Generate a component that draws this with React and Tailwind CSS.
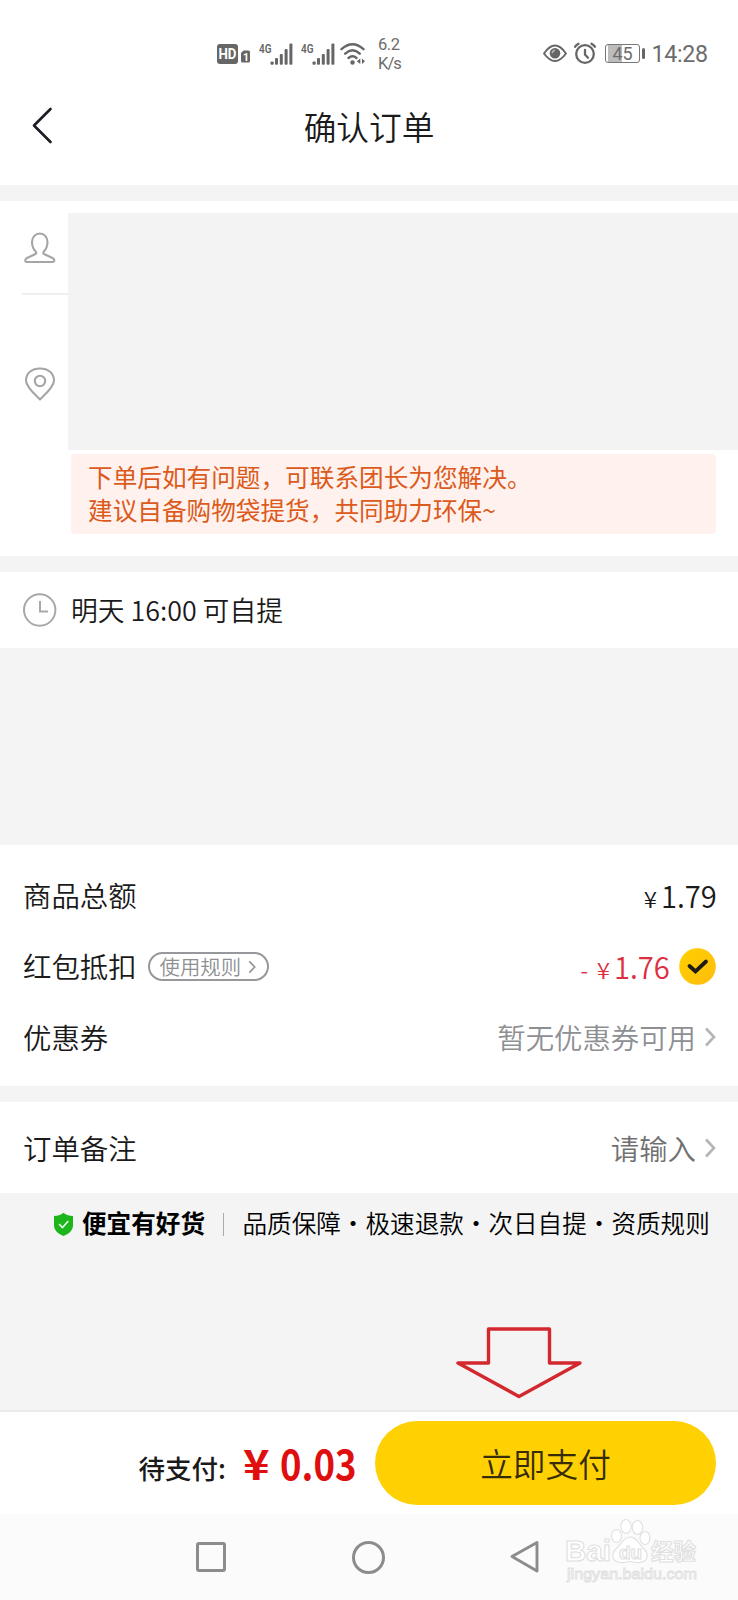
const font = "font-['Noto_Sans_CJK_SC','Noto_Sans',sans-serif]";

function Signal() {
  return (
    <svg width="36" height="24" viewBox="0 0 36 24" fill="#666">
      <text x="0" y="11" fontFamily="Roboto, sans-serif" fontSize="12.500" fontWeight="600" textLength="12.500" lengthAdjust="spacingAndGlyphs">4G</text>
      <rect x="11.500" y="19.500" width="3.200" height="3.200" rx="1" />
      <rect x="16" y="16" width="3" height="6.700" rx="1" />
      <rect x="20.800" y="12" width="3" height="10.700" rx="1" />
      <rect x="25.600" y="7" width="3" height="15.700" rx="1" />
      <rect x="30.400" y="1.500" width="3" height="21.200" rx="1" />
    </svg>
  );
}

function StatusBar() {
  return (
    <div className="flex h-[90px] items-start pt-[42px] pl-[217px] font-[Roboto,sans-serif] font-normal text-[#6c6c6c]">
      <svg width="34" height="24" viewBox="0 0 34 24" fill="#666">
        <rect x="0" y="2" width="21" height="20" rx="3" />
        <text x="1.500" y="17" fill="#fff" fontFamily="Roboto, sans-serif" fontSize="14" fontWeight="700" textLength="18" lengthAdjust="spacingAndGlyphs">HD</text>
        <path d="M26.500 8.500H31.500a1.500 1.500 0 0 1 1.500 1.500V19a1.500 1.500 0 0 1-1.500 1.500H25.500a1.500 1.500 0 0 1-1.500-1.500V11z" />
        <text x="26" y="18.500" fill="#fff" fontFamily="Roboto, sans-serif" fontSize="10.500" fontWeight="700">1</text>
      </svg>
      <div className="ml-[8px] flex gap-[6px]">
        <Signal />
        <Signal />
      </div>
      <svg className="ml-[3px]" width="28" height="24" viewBox="0 0 28 24" fill="none" stroke="#666" strokeWidth="2.400" strokeLinecap="round">
        <path d="M1.500 7.200Q12.500 -2.800 23.500 7.200" />
        <path d="M5.200 11.700Q12.500 5 19.800 11.700" />
        <path d="M8.500 16Q12.500 12.500 16.500 16" />
        <circle cx="12.500" cy="20.500" r="2.200" fill="#666" stroke="none" />
        <path d="M20.300 16.500v5.500l-3.500-2.750zM22 16.500v5.500l3-2.750z" fill="#666" stroke="none" />
      </svg>
      <div className="-mt-[7px] ml-[10px] w-[50px] text-[16.500px] leading-[19px]">
        <div className="-tracking-[0.4px]">6.2</div>
        <div className="-tracking-[0.9px]">K/s</div>
      </div>
      <svg className="ml-[115px]" width="24" height="24" viewBox="0 0 24 24" fill="none" stroke="#666" strokeWidth="1.900">
        <path d="M1 11.500Q12 -4.500 23 11.500Q12 26.500 1 11.500z" strokeLinejoin="round" />
        <circle cx="12" cy="11.300" r="5.300" fill="#666" stroke="none" />
        <path d="M9.200 11.200q.2-2.500 2.800-2.900" stroke="#bbb" strokeWidth="1.400" />
      </svg>
      <svg className="ml-[6px]" width="24" height="24" viewBox="0 0 24 24" fill="none" stroke="#666" strokeWidth="2.300" strokeLinecap="round">
        <circle cx="12" cy="12" r="8.800" />
        <path d="M12 8v4.500l3 3.200M2 4.700Q3.300 3 5.500 1.700M22 4.700Q20.700 3 18.500 1.700" />
      </svg>
      <div className="mt-[2px] ml-[8px] flex h-[19px] w-[35px] items-center justify-center rounded-[3px] border border-[#777] bg-[linear-gradient(90deg,#fff_2px,#bcbcbc_2px,#bcbcbc_16px,#fff_16px)] text-[18px] leading-none">
        45
      </div>
      <div className="mt-[6px] ml-[1.500px] h-[11px] w-[3px] rounded-sm bg-[#666]" />
      <div className="-mt-[1px] ml-[7px] text-[23.200px] leading-[27px] -tracking-[0.3px]">14:28</div>
    </div>
  );
}

function Chevron({ width = 12, height = 20, color = "#b4b5b9" }) {
  return (
    <svg width={width} height={height} viewBox="0 0 12 20" fill="none" stroke={color} strokeWidth="2.600">
      <path d="M2 1.500L10 10L2 18.500" />
    </svg>
  );
}

function Price({ value }) {
  return (
    <span className="flex items-baseline pb-[3px]">
      <span className="mr-[4px] inline-block origin-right scale-x-110 text-[22px] leading-none">¥</span>
      <span className="inline-block w-[55px] origin-left scale-x-[.94] text-[31px] leading-none">{value}</span>
    </span>
  );
}

function Watermark() {
  return (
    <svg className="absolute top-[4px] left-[560px]" width="145" height="82" viewBox="0 0 145 82" fill="#fff" stroke="#e0e0e0" strokeWidth="1.100">
      <text x="5" y="43" fontFamily="Liberation Sans, sans-serif" fontSize="30" fontWeight="700" textLength="46" lengthAdjust="spacingAndGlyphs">Bai</text>
      <ellipse cx="56.500" cy="18" rx="5" ry="6.500" />
      <ellipse cx="66" cy="8.500" rx="5.200" ry="7" />
      <ellipse cx="77.500" cy="9.500" rx="5.200" ry="7" />
      <ellipse cx="85" cy="20" rx="5" ry="6.500" />
      <path d="M70 19C64 19 61 26 57 30C51 35 51 43 60 44.500C65 45 67 43.500 70 43.500S76 45 80 44.500C89 43 89 35 83 30C79 26 77 19 70 19z" />
      <text x="59" y="41" fontFamily="Liberation Sans, sans-serif" fontSize="19" fontWeight="700">du</text>
      <text x="91" y="41.500" fontFamily="Noto Sans CJK SC, sans-serif" fontSize="22.500" fontWeight="700">经验</text>
      <text x="7" y="61" fontFamily="Liberation Sans, sans-serif" fontSize="15.500" fontWeight="400" strokeWidth=".9" textLength="130" lengthAdjust="spacingAndGlyphs">jingyan.baidu.com</text>
    </svg>
  );
}

export default function App() {
  return (
    <div className={`relative flex h-[1600px] w-[738px] flex-col overflow-hidden bg-[#f4f4f4] font-[350] text-[#1a1a1a] ${font}`}>
      <header className="h-[185px] bg-white">
        <StatusBar />
        <div className="grid h-[72px] grid-cols-[1fr_auto_1fr] items-center">
          <svg className="ml-[31px]" width="23" height="38" viewBox="0 0 23 38" fill="none" stroke="#1b1c24" strokeWidth="2.600" strokeLinecap="round" strokeLinejoin="round">
            <path d="M19.500 2L3 18.500L19.500 35" />
          </svg>
          <h1 className="text-[32.700px] leading-[40px] font-[350]">确认订单</h1>
        </div>
      </header>

      {/* Pickup contact and address */}
      <section className="mt-[16px] h-[355px] bg-white pt-[12px]">
        <div className="flex h-[237px]">
          <div className="w-[68px] pl-[22px]">
            <div className="h-[82px] border-b-2 border-[#efefef] pt-[18px]">
              <svg width="36" height="34" viewBox="0 0 36 34" fill="none" stroke="#a5a5a5" strokeWidth="2.100" strokeLinejoin="round">
                <path d="M14 21C11.500 18.500 10 15 10 11C10 6 13.500 2.500 17.800 2.500S25.500 6 25.500 11C25.500 15 24 18.500 21.500 21Q21 22.500 22 23L30.500 27Q32.500 28 32.300 30Q32 31 30.500 31H5Q3.500 31 3.300 30Q3 28 5 27L13.500 23Q14.700 22.500 14 21z" />
              </svg>
            </div>
            <svg className="mt-[70px]" width="36" height="38" viewBox="0 0 36 38" fill="none" stroke="#a5a5a5" strokeWidth="2.100" strokeLinejoin="round">
              <path d="M18 34.500C13 29.500 4 22 4 15.500C4 8 10 3.500 18 3.500S32 8 32 15.500C32 22 23 29.500 18 34.500z" />
              <circle cx="18" cy="16" r="5.200" />
            </svg>
          </div>
          <div className="flex-1 bg-[#f3f3f3]" />
        </div>
        <div className="mt-[4px] mr-[22px] ml-[71px] h-[80px] rounded-[4px] bg-[#fff2ee] pt-[6px] pl-[17px] text-[24.650px] leading-[33px] font-normal text-[#dc5a1b]">
          <p>下单后如有问题，可联系团长为您解决。</p>
          <p>建议自备购物袋提货，共同助力环保~</p>
        </div>
      </section>

      {/* Pickup time */}
      <section className="mt-[16px] flex h-[76px] items-center bg-white pl-[22px]">
        <svg width="36" height="36" viewBox="0 0 36 36" fill="none" stroke="#a8a8a8" strokeWidth="2">
          <circle cx="17.700" cy="18" r="15.700" />
          <path d="M18 9v10.500h8" />
        </svg>
        <span className="ml-[13px] text-[26.800px] leading-none">明天 16:00 可自提</span>
      </section>

      {/* Amounts */}
      <section className="mt-[197px] h-[241px] bg-white pt-[15px] pr-[22px] pl-[23px] text-[28.400px]">
        <div className="flex h-[71px] items-center justify-between">
          <span>商品总额</span>
          <Price value="1.79" />
        </div>
        <div className="flex h-[71px] items-center">
          <span>红包抵扣</span>
          <span className="ml-[11px] flex h-[29px] w-[121px] items-center rounded-full border-2 border-[#97989c] pl-[10px] text-[20.400px] leading-none text-[#8e8f93]">
            使用规则
            <span className="ml-[7px]">
              <Chevron width={8} height={14} color="#95969a" />
            </span>
          </span>
          <span className="ml-auto flex items-baseline text-[#dc2f3f]">
            <span className="mr-[10px] text-[22px] leading-none">-</span>
            <Price value="1.76" />
          </span>
          <svg className="ml-[10px]" width="37" height="37" viewBox="0 0 37 37">
            <defs>
              <linearGradient id="check" x1="0" y1="0" x2="1" y2="1">
                <stop offset="0" stopColor="#ffd000" />
                <stop offset="1" stopColor="#ffbc0d" />
              </linearGradient>
            </defs>
            <circle cx="18.500" cy="18.500" r="18.300" fill="url(#check)" />
            <path d="M10.500 18L16.500 23.500L27 13.500" fill="none" stroke="#1d1d12" strokeWidth="3.800" strokeLinecap="round" />
          </svg>
        </div>
        <div className="flex h-[71px] items-center justify-between">
          <span>优惠券</span>
          <span className="flex items-center text-[#8e8f93]">
            暂无优惠券可用
            <span className="ml-[8px]">
              <Chevron />
            </span>
          </span>
        </div>
      </section>

      {/* Remark */}
      <section className="mt-[16px] flex h-[91px] items-center justify-between bg-white pt-[2px] pr-[22px] pl-[23px] text-[28.400px]">
        <span>订单备注</span>
        <span className="flex items-center text-[#707070]">
          请输入
          <span className="ml-[8px]">
            <Chevron />
          </span>
        </span>
      </section>

      <div className="flex h-[217px] items-start pt-[10px] pl-[53px] text-[24.600px] leading-[38px] text-black">
        <svg className="mt-[9px]" width="21" height="25" viewBox="0 0 21 25">
          <path d="M10.500 .8Q14.500 4 20 4V14Q19.500 20.500 10.500 24Q1.500 20.500 1 14V4Q6.500 4 10.500 .8z" fill="#1cb51c" />
          <path d="M6 12L9.500 15.500L15.300 9" fill="none" stroke="#e8ffe8" strokeWidth="1.600" />
        </svg>
        <b className="ml-[8px] font-bold">便宜有好货</b>
        <span className="mt-[10px] ml-[18px] h-[23px] w-px bg-[#aaa]" />
        <span className="ml-[18.500px] whitespace-nowrap">品质保障・极速退款・次日自提・资质规则</span>
      </div>

      <svg className="absolute top-[1325px] left-[455px]" width="128" height="76" viewBox="0 0 128 76" fill="none" stroke="#d4282f" strokeWidth="3.400" strokeLinejoin="round">
        <path d="M33.500 4H94.500V38H125L64 71.500L3 38H33.500z" />
      </svg>

      <footer className="flex h-[104px] items-start justify-end border-t-2 border-[#ebebeb] bg-white pt-[9px] pr-[22px]">
        <span className="mt-[28px] text-[26.500px] leading-[38px] font-medium">待支付:</span>
        <span className="mt-[19px] ml-[17px] flex items-baseline text-[#df0f0f]">
          <span className="inline-block w-[26px] origin-left scale-x-110 text-[41px] leading-[44px] font-bold">¥</span>
          <span className="ml-[11px] inline-block w-[78px] origin-left scale-x-[.88] text-[41.500px] leading-[44px] font-bold">0.03</span>
        </span>
        <button type="button" className="ml-[17px] h-[84px] w-[341px] rounded-full bg-[#ffd103] text-[32.700px] font-[350] text-[#362c08]">
          立即支付
        </button>
      </footer>

      <nav className="relative flex h-[86px] items-center bg-[#fbfbfb] pl-[196px]">
        <div className="h-[30px] w-[30px] rounded-[3px] border-[3px] border-[#8c8c8c]" />
        <div className="ml-[126px] h-[33px] w-[33px] rounded-full border-[3px] border-[#8c8c8c]" />
        <svg className="ml-[125px]" width="31" height="34" viewBox="0 0 31 34" fill="none" stroke="#8c8c8c" strokeWidth="2.900" strokeLinejoin="round">
          <path d="M27 2.500V31L2 16.500z" />
        </svg>
        <Watermark />
      </nav>
    </div>
  );
}
